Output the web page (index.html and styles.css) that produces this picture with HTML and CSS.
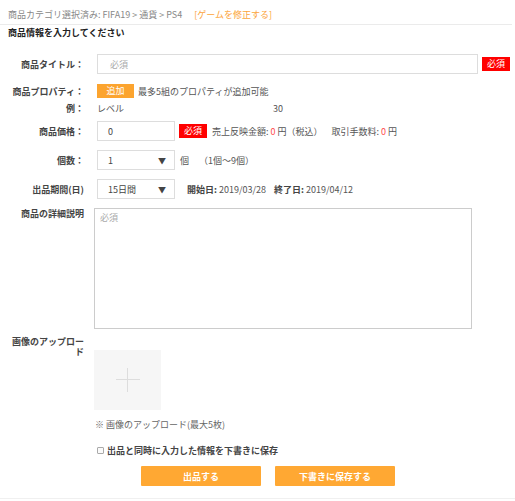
FILE: index.html
```html
<!DOCTYPE html>
<html lang="ja">
<head>
<meta charset="utf-8">
<link rel="stylesheet" href="styles.css">
</head>
<body>
<div class="crumb">商品カテゴリ選択済み: FIFA19 &gt; 通貨 &gt; PS4<a class="fix">[ゲームを修正する]</a></div>
<div class="rule"></div>
<h1 class="heading">商品情報を入力してください</h1>
<div class="form">
  <div class="row r-title">
    <label class="lbl">商品タイトル：</label>
    <div class="val">
      <div class="input wide"><span class="ph">必須</span></div>
      <span class="req">必須</span>
    </div>
  </div>
  <div class="row r-prop">
    <label class="lbl">商品プロパティ：</label>
    <div class="val">
      <span class="add">追加</span>
      <span class="txt">最多5組のプロパティが追加可能</span>
    </div>
  </div>
  <div class="row r-ex">
    <label class="lbl">例：</label>
    <div class="val">
      <span class="ex-k">レベル</span>
      <span class="txt">30</span>
    </div>
  </div>
  <div class="row r-price">
    <label class="lbl">商品価格：</label>
    <div class="val">
      <div class="input small"><span class="v">0</span></div>
      <span class="req">必須</span>
      <span class="txt">売上反映金額: <b class="red">0</b> 円（税込）</span>
      <span class="txt fee">取引手数料: <b class="red">0</b> 円</span>
    </div>
  </div>
  <div class="row r-qty">
    <label class="lbl">個数：</label>
    <div class="val">
      <div class="input small sel"><span class="v">1</span><span class="arrow">▼</span></div>
      <span class="txt">個</span>
      <span class="txt range">（1個〜9個）</span>
    </div>
  </div>
  <div class="row r-period">
    <label class="lbl">出品期間(日)</label>
    <div class="val">
      <div class="input small sel"><span class="v">15日間</span><span class="arrow">▼</span></div>
      <span class="txt date"><b>開始日:</b> 2019/03/28</span>
      <span class="txt date"><b>終了日:</b> 2019/04/12</span>
    </div>
  </div>
  <div class="row r-desc">
    <label class="lbl">商品の詳細説明</label>
    <div class="val">
      <div class="area"><span class="ph">必須</span></div>
    </div>
  </div>
  <div class="row r-img">
    <label class="lbl">画像のアップロード</label>
    <div class="val col">
      <div class="upload"><span class="plus-h"></span><span class="plus-v"></span></div>
    </div>
  </div>
  <div class="row r-note">
    <span></span>
    <div class="val"><span class="txt note">※ 画像のアップロード(最大5枚)</span></div>
  </div>
  <div class="row r-check">
    <span></span>
    <div class="val"><span class="box"></span><span class="check-txt">出品と同時に入力した情報を下書きに保存</span></div>
  </div>
  <div class="buttons">
    <button class="btn">出品する</button>
    <button class="btn">下書きに保存する</button>
  </div>
</div>
<div class="bottom"></div>
</body>
</html>
```

FILE: styles.css
```css
* { box-sizing: border-box; }
body {
  margin: 0;
  font-family: "Noto Sans CJK JP", "Noto Sans", sans-serif;
  font-size: 9px;
  color: #333;
  background: #fff;
}
.crumb {
  padding: 8px 8px 0;
  height: 22px;
  line-height: 14px;
  color: #888;
}
.fix {
  color: #fca43a;
  margin-left: 12px;
}
.rule {
  margin-top: 2px;
  margin-right: 3px;
  border-top: 1px solid #ebebeb;
}
.heading {
  margin: 1px 0 0;
  padding-left: 8px;
  font-size: 9px;
  line-height: 14px;
  font-weight: bold;
  color: #222;
}
.form {
  margin-top: 14px;
  display: flex;
  flex-direction: column;
}
.row {
  display: grid;
  grid-template-columns: 76px 1fr;
  column-gap: 13px;
  padding-left: 8px;
  align-items: center;
}
.lbl {
  text-align: right;
  font-weight: bold;
  color: #444;
  line-height: 11px;
}
.val {
  display: flex;
  align-items: center;
  height: 100%;
  white-space: nowrap;
}
.txt { color: #555; }
.input {
  height: 20px;
  border: 1px solid #ddd;
  display: flex;
  align-items: center;
  background: #fff;
}
.wide { width: 381px; padding-left: 12px; }
.small { width: 78px; padding-left: 10px; padding-right: 8px; }
.ph { color: #aaa; }
.v { color: #444; }
.sel { justify-content: space-between; }
.arrow { font-size: 8px; color: #444; }
.req {
  background: #ff0000;
  color: #fff;
  height: 14px;
  line-height: 14px;
  width: 28px;
  text-align: center;
  margin-left: 4px;
}
.r-title { height: 20px; }
.r-prop { height: 14px; margin-top: 10px; }
.add {
  background: #fca42f;
  color: #fff;
  width: 37px;
  height: 14px;
  line-height: 14px;
  text-align: center;
  margin-right: 4px;
}
.r-ex { height: 14px; margin-top: 3px; }
.ex-k { width: 176px; color: #555; }
.r-price { height: 20px; margin-top: 6px; }
.r-price .req { margin-right: 5px; }
.red { color: #ff4b4b; font-weight: normal; }
.fee { margin-left: 9px; }
.r-qty { height: 19px; margin-top: 9px; }
.r-qty .txt { margin-left: 5px; }
.r-qty .range { margin-left: 10px; }
.r-period { height: 19px; margin-top: 10px; }
.date { margin-left: 12px; }
.date + .date { margin-left: 8px; }
.date b { color: #444; }
.r-desc { margin-top: 10px; align-items: start; }
.area {
  margin-left: -3px;
  width: 378px;
  height: 121px;
  border: 1px solid #ccc;
  padding: 2px 5px;
  align-self: start;
  display: block;
}
.r-img { margin-top: 8px; align-items: start; }
.r-img .lbl { line-height: 10px; }
.upload {
  margin-left: -3px;
  margin-top: 13px;
  width: 67px;
  height: 60px;
  background: #f6f6f6;
  position: relative;
}
.plus-h {
  position: absolute;
  left: 22px; top: 29px;
  width: 24px; height: 1px;
  background: #ddd;
}
.plus-v {
  position: absolute;
  left: 33px; top: 18px;
  width: 1px; height: 24px;
  background: #ddd;
}
.r-note { margin-top: 8px; height: 12px; }
.note { margin-left: -2px; color: #666; }
.r-check { margin-top: 14px; height: 12px; }
.box {
  width: 7px; height: 7px;
  border: 1px solid #aaa;
  border-radius: 1px;
  margin-right: 3px;
  background: #fafafa;
}
.check-txt { font-weight: bold; color: #444; }
.buttons {
  margin-top: 10px;
  display: flex;
  gap: 14px;
  padding-left: 141px;
}
.btn {
  width: 120px;
  height: 20px;
  border: none;
  border-radius: 1px;
  background: #ffa833;
  color: #fff;
  font-family: inherit;
  font-size: 9px;
  font-weight: bold;
  padding: 0;
}
.bottom {
  margin-top: 12px;
  border-top: 1px solid #f0f0f0;
}
```
